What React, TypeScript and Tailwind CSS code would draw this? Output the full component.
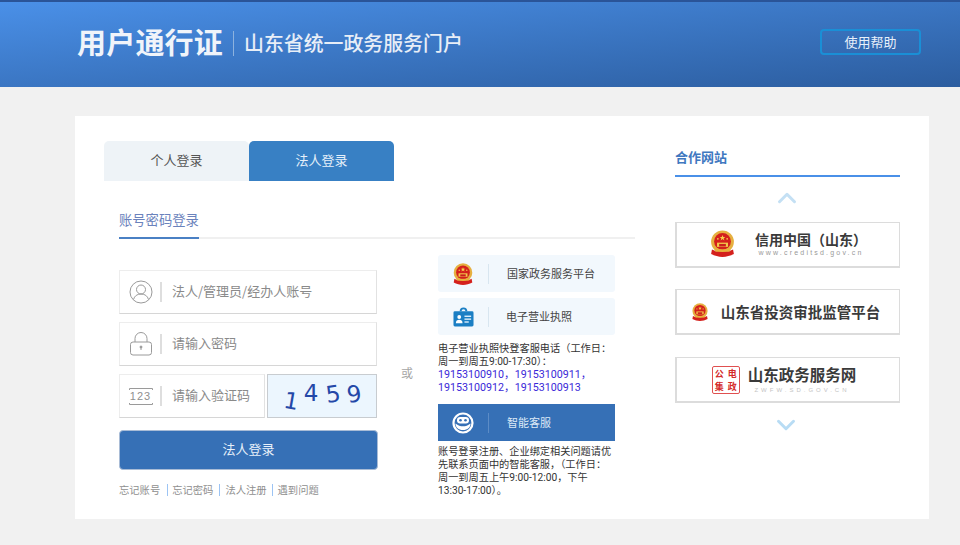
import React from "react";
import { ChevronDown, ChevronUp } from "lucide-react";

function Emblem({ size }: { size: number }) {
  return (
    <svg width={size} height={size} viewBox="0 0 32 32" className="shrink-0">
      <circle cx="16" cy="14" r="13.500" fill="#e6b040" />
      <circle cx="16" cy="13.500" r="10" fill="#d4201c" />
      <path d="M16 6l.9 2.400h2.500l-2 1.500.8 2.400-2.200-1.500-2.200 1.500.8-2.400-2-1.500h2.500z" fill="#f6d24a" />
      <circle cx="10.500" cy="10.500" r="1" fill="#f6d24a" />
      <circle cx="21.500" cy="10.500" r="1" fill="#f6d24a" />
      <rect x="9.500" y="15" width="13" height="5" fill="#f2c84a" />
      <rect x="12" y="16.500" width="8" height="3" fill="#c9201c" />
      <path d="M3.500 23c3.500 2 8 3 12.500 3s9-1 12.500-3l1 5.500c-4 2-9 3.500-13.500 3.500s-9.500-1.500-13.500-3.500z" fill="#d4201c" />
      <path d="M7 23h18v2.500H7z" fill="#e8b23c" />
    </svg>
  );
}

function BadgeIcon() {
  return (
    <svg width="21" height="20" viewBox="0 0 22 20">
      <path d="M8 4a3 3 0 0 1 6 0" fill="none" stroke="#1b7fc4" strokeWidth="2" />
      <rect x="0.500" y="4" width="21" height="16" rx="1.500" fill="#1b7fc4" />
      <circle cx="6.500" cy="10" r="2" fill="#fff" />
      <path d="M3 16.500c0-2.400 1.500-3.500 3.500-3.500s3.500 1.100 3.500 3.500z" fill="#fff" />
      <rect x="12" y="8.500" width="7" height="1.500" fill="#d7ecfa" />
      <rect x="12" y="11.500" width="7" height="1.500" fill="#d7ecfa" />
      <rect x="12" y="14.500" width="4.500" height="1.500" fill="#d7ecfa" />
    </svg>
  );
}

function RobotIcon() {
  return (
    <svg width="22" height="22" viewBox="0 0 22 22">
      <circle cx="11" cy="11" r="9.500" fill="#3670b6" stroke="#fff" strokeWidth="2.200" />
      <rect x="5" y="5" width="12" height="6.500" rx="3.200" fill="#fff" />
      <circle cx="8.500" cy="8.200" r="1.300" fill="#3670b6" />
      <circle cx="13.500" cy="8.200" r="1.300" fill="#3670b6" />
      <path d="M3.500 11.500c2.500 2 5 2.800 7.500 2.800s5-.8 7.500-2.800c0 4-3 6.500-7.500 6.500s-7.500-2.500-7.500-6.500z" fill="#fff" />
    </svg>
  );
}

function UserIcon() {
  return (
    <svg width="24" height="24" viewBox="0 0 24 24" fill="none" stroke="#9a9a9a" strokeWidth="1">
      <circle cx="12" cy="12" r="11" />
      <circle cx="12" cy="9.500" r="4.500" />
      <path d="M4.500 19.500c1-3.500 3.500-5.500 7.500-5.500s6.500 2 7.500 5.500" />
    </svg>
  );
}

function LockIcon() {
  return (
    <svg width="24" height="24" viewBox="0 0 24 24" fill="none" stroke="#9a9a9a" strokeWidth="1">
      <path d="M6 10V6.500a6 6 0 0 1 12 0V10" />
      <rect x="1.500" y="10" width="21" height="13" rx="2.500" />
      <circle cx="12" cy="15" r="1" fill="#9a9a9a" />
      <path d="M12 15v3" />
    </svg>
  );
}

function CodeIcon() {
  return (
    <div className="relative flex h-[19px] w-[24px] items-center justify-center text-[11px] leading-none tracking-[1px] text-[#8f8f8f] font-['Liberation_Sans',sans-serif]">
      <svg width="24" height="19" viewBox="0 0 24 19" fill="none" stroke="#9a9a9a" strokeWidth="1" className="absolute inset-0">
        <path d="M.5 3V1.500h23V3M.5 16v1.500h23V16" />
      </svg>
      123
    </div>
  );
}

function Field({ icon, text, width }: { icon: React.ReactNode; text: string; width: string }) {
  return (
    <div className={`flex h-[44px] items-center border border-t-[#ededed] border-l-[#ededed] border-r-[#e2e2e2] border-b-[#d6d6d6] bg-white ${width}`}>
      <div className="flex w-[40px] justify-center pl-[1px]">{icon}</div>
      <div className="h-[20px] w-[2px] bg-[#dedede]" />
      <div className="pb-[2px] pl-[10px] text-[13px] text-[#8a8a8a]">{text}</div>
    </div>
  );
}

function SideRow({ icon, text, active, textPad }: { icon: React.ReactNode; text: string; active?: boolean; textPad: string }) {
  return (
    <div className={`flex h-[37px] w-[177px] items-center ${active ? "bg-[#3670b6]" : "rounded-[3px] bg-[#f2f8fd]"}`}>
      <div className="flex w-[50px] justify-center">{icon}</div>
      <div className={`h-[20px] w-px ${active ? "bg-[#5c8cc6]" : "bg-[#d8e6f0]"}`} />
      <div className={`${textPad} pb-[1px] text-[11px] ${active ? "text-[#dce9f6]" : "text-[#444]"}`}>{text}</div>
    </div>
  );
}

function PartnerBox({ children }: { children: React.ReactNode }) {
  return (
    <div className="flex h-[46px] w-[225px] items-center justify-center border border-[#dcdcdc] border-b-2 border-l-2 bg-white">
      {children}
    </div>
  );
}

export default function App() {
  return (
    <div className="h-[545px] w-[960px] overflow-hidden bg-[#f1f1f1] font-['Noto_Sans_CJK_SC','Noto_Sans',sans-serif]">
      <div className="flex h-[87px] items-center justify-between border-t-2 border-[#2a5498] bg-gradient-to-br from-[#4a90e8] to-[#2c5d9f] pb-[5px] pl-[77px] pr-[39px]">
        <div className="flex items-center text-white">
          <span className="text-[29px] font-bold tracking-[0.2px] text-[#f0f4fa]">用户通行证</span>
          <span className="mx-[10px] mt-[2px] h-[25px] w-px bg-[#8db2de]" />
          <span className="mt-[2px] text-[19.900px] font-medium text-[#e8eef7]">山东省统一政务服务门户</span>
        </div>
        <div className="flex h-[26px] w-[101px] items-center justify-center rounded-[4px] border-2 border-[#1a8fd6] text-[13px] text-[#e8f0fa]">
          使用帮助
        </div>
      </div>

      <div className="ml-[75px] mt-[29px] flex h-[403px] w-[854px] bg-white pl-[29px] pt-[25px]">
        <div className="w-[531px]">
          <div className="flex h-[40px] w-[290px] text-[13px]">
            <div className="flex w-[145px] items-center justify-center rounded-t-[5px] bg-[#eef3f7] pb-[2px] text-[#555]">个人登录</div>
            <div className="flex w-[145px] items-center justify-center rounded-t-[5px] bg-[#3880c4] pb-[2px] text-[#e6f0fa]">法人登录</div>
          </div>

          <div className="ml-[15px] mt-[29px] h-[29px] w-[516px] border-b-2 border-[#f0f0f0]">
            <div className="h-[29px] w-[80px] border-b-2 border-[#4a80c4] text-[13.300px] leading-[20px] text-[#6a82bc]">账号密码登录</div>
          </div>

          <div className="mt-[16px] flex">
            <div className="ml-[15px] w-[259px] pt-[15px]">
              <Field icon={<UserIcon />} text="法人/管理员/经办人账号" width="w-[258px]" />
              <div className="mt-[8px]">
                <Field icon={<LockIcon />} text="请输入密码" width="w-[258px]" />
              </div>
              <div className="mt-[8px] flex w-[258px] justify-between">
                <Field icon={<CodeIcon />} text="请输入验证码" width="w-[146px]" />
                <div className="flex h-[44px] w-[110px] items-center justify-center gap-[7px] border border-[#c8ccd0] bg-[#ecf6fe] text-[23px] leading-none text-[#2448a8] font-['DejaVu_Sans',sans-serif]">
                  <span className="translate-x-[2px] translate-y-[5px] rotate-[10deg]">1</span>
                  <span className="-translate-y-[3px]">4</span>
                  <span className="-translate-y-[2px] -rotate-[8deg]">5</span>
                  <span className="-translate-y-[2px] rotate-[-8deg]">9</span>
                </div>
              </div>
              <div className="mt-[12px] flex h-[40px] w-[259px] items-center justify-center rounded-[4px] border border-[#a9bcd6] bg-[#3670b6] pb-[2px] text-[13px] text-[#e8f0fa]">
                法人登录
              </div>
              <div className="mt-[12px] flex items-center text-[10.300px] leading-[16px] text-[#8f8f8f]">
                <span>忘记账号</span>
                <span className="ml-[7px] mr-[4px] h-[12px] w-px bg-[#9cc4f4]" />
                <span>忘记密码</span>
                <span className="ml-[6px] mr-[5px] h-[12px] w-px bg-[#9cc4f4]" />
                <span>法人注册</span>
                <span className="mx-[5px] h-[12px] w-px bg-[#9cc4f4]" />
                <span>遇到问题</span>
              </div>
            </div>

            <div className="relative ml-[29px] flex h-[236px] w-px items-center justify-center bg-[#ececec]">
              <span className="absolute bg-white py-[8px] text-[12px] text-[#a6a6a6]">或</span>
            </div>

            <div className="ml-[31px] flex w-[177px] flex-col">
              <SideRow icon={<Emblem size={22} />} text="国家政务服务平台" textPad="pl-[18px]" />
              <div className="mt-[6px]">
                <SideRow icon={<BadgeIcon />} text="电子营业执照" textPad="pl-[17px]" />
              </div>
              <div className="mt-[7px] whitespace-nowrap text-[10.200px] leading-[13px] text-[#333] font-['Roboto','Noto_Sans_CJK_SC',sans-serif]">
                <div>电子营业执照快登客服电话（工作日：</div>
                <div>周一到周五9:00-17:30）：</div>
                <div className="text-[10.700px] text-[#3a28d8]">19153100910，19153100911，</div>
                <div className="text-[10.700px] text-[#3a28d8]">19153100912，19153100913</div>
              </div>
              <div className="mt-[10px]">
                <SideRow icon={<RobotIcon />} text="智能客服" active textPad="pl-[18px]" />
              </div>
              <div className="mt-[4px] whitespace-nowrap text-[10.200px] leading-[13px] text-[#333] font-['Roboto','Noto_Sans_CJK_SC',sans-serif]">
                <div>账号登录注册、企业绑定相关问题请优</div>
                <div>先联系页面中的智能客服，（工作日：</div>
                <div>周一到周五上午9:00-12:00，下午</div>
                <div>13:30-17:00）。</div>
              </div>
            </div>

            <div className="ml-[24px] h-[252px] w-px bg-[#ececec]" />
          </div>
        </div>

        <div className="ml-[40px] w-[226px]">
          <div className="h-[36px] w-[225px] border-b-2 border-[#4a90e8] pt-[4px] text-[13px] font-bold leading-[24px] text-[#3f78c0]">合作网站</div>
          <div className="flex h-[45px] justify-center pt-[6px] pr-[2px]">
            <ChevronUp size={30} className="text-[#c4e0f4]" strokeWidth={2.400} />
          </div>
          <PartnerBox>
            <div className="flex items-center pb-[2px]">
              <Emblem size={27} />
              <div className="ml-[19px] flex flex-col items-center">
                <span className="text-[14px] font-bold leading-[18px] text-[#3a3a3a]">信用中国（山东）</span>
                <span className="text-[7px] leading-[9px] tracking-[2.200px] text-[#999] font-['Liberation_Sans',sans-serif]">www.creditsd.gov.cn</span>
              </div>
            </div>
          </PartnerBox>
          <div className="mt-[21px]">
            <PartnerBox>
              <div className="flex items-center pr-[5px]">
                <Emblem size={18} />
                <span className="ml-[12px] text-[14.500px] font-bold text-[#3a3a3a]">山东省投资审批监管平台</span>
              </div>
            </PartnerBox>
          </div>
          <div className="mt-[22px]">
            <PartnerBox>
              <div className="flex items-center pr-[8px]">
                <div className="grid h-[28px] w-[28px] grid-cols-2 rounded-[2px] border border-[#e05050] text-center text-[9px] font-bold leading-[13px] text-[#d42a2a]">
                  <span>公</span>
                  <span>电</span>
                  <span>集</span>
                  <span>政</span>
                </div>
                <div className="ml-[8px] flex flex-col items-center">
                  <span className="text-[15.500px] font-bold leading-[20px] text-[#3a3a3a] font-['Roboto','Noto_Sans_CJK_SC',sans-serif]">山东政务服务网</span>
                  <span className="text-[6px] leading-[8px] tracking-[3px] text-[#c4c4c4] font-['Liberation_Sans',sans-serif]">ZWFW.SD.GOV.CN</span>
                </div>
              </div>
            </PartnerBox>
          </div>
          <div className="flex justify-center pt-[7px] pr-[4px]">
            <ChevronDown size={30} className="text-[#b8dcf4]" strokeWidth={2.400} />
          </div>
        </div>
      </div>
    </div>
  );
}
